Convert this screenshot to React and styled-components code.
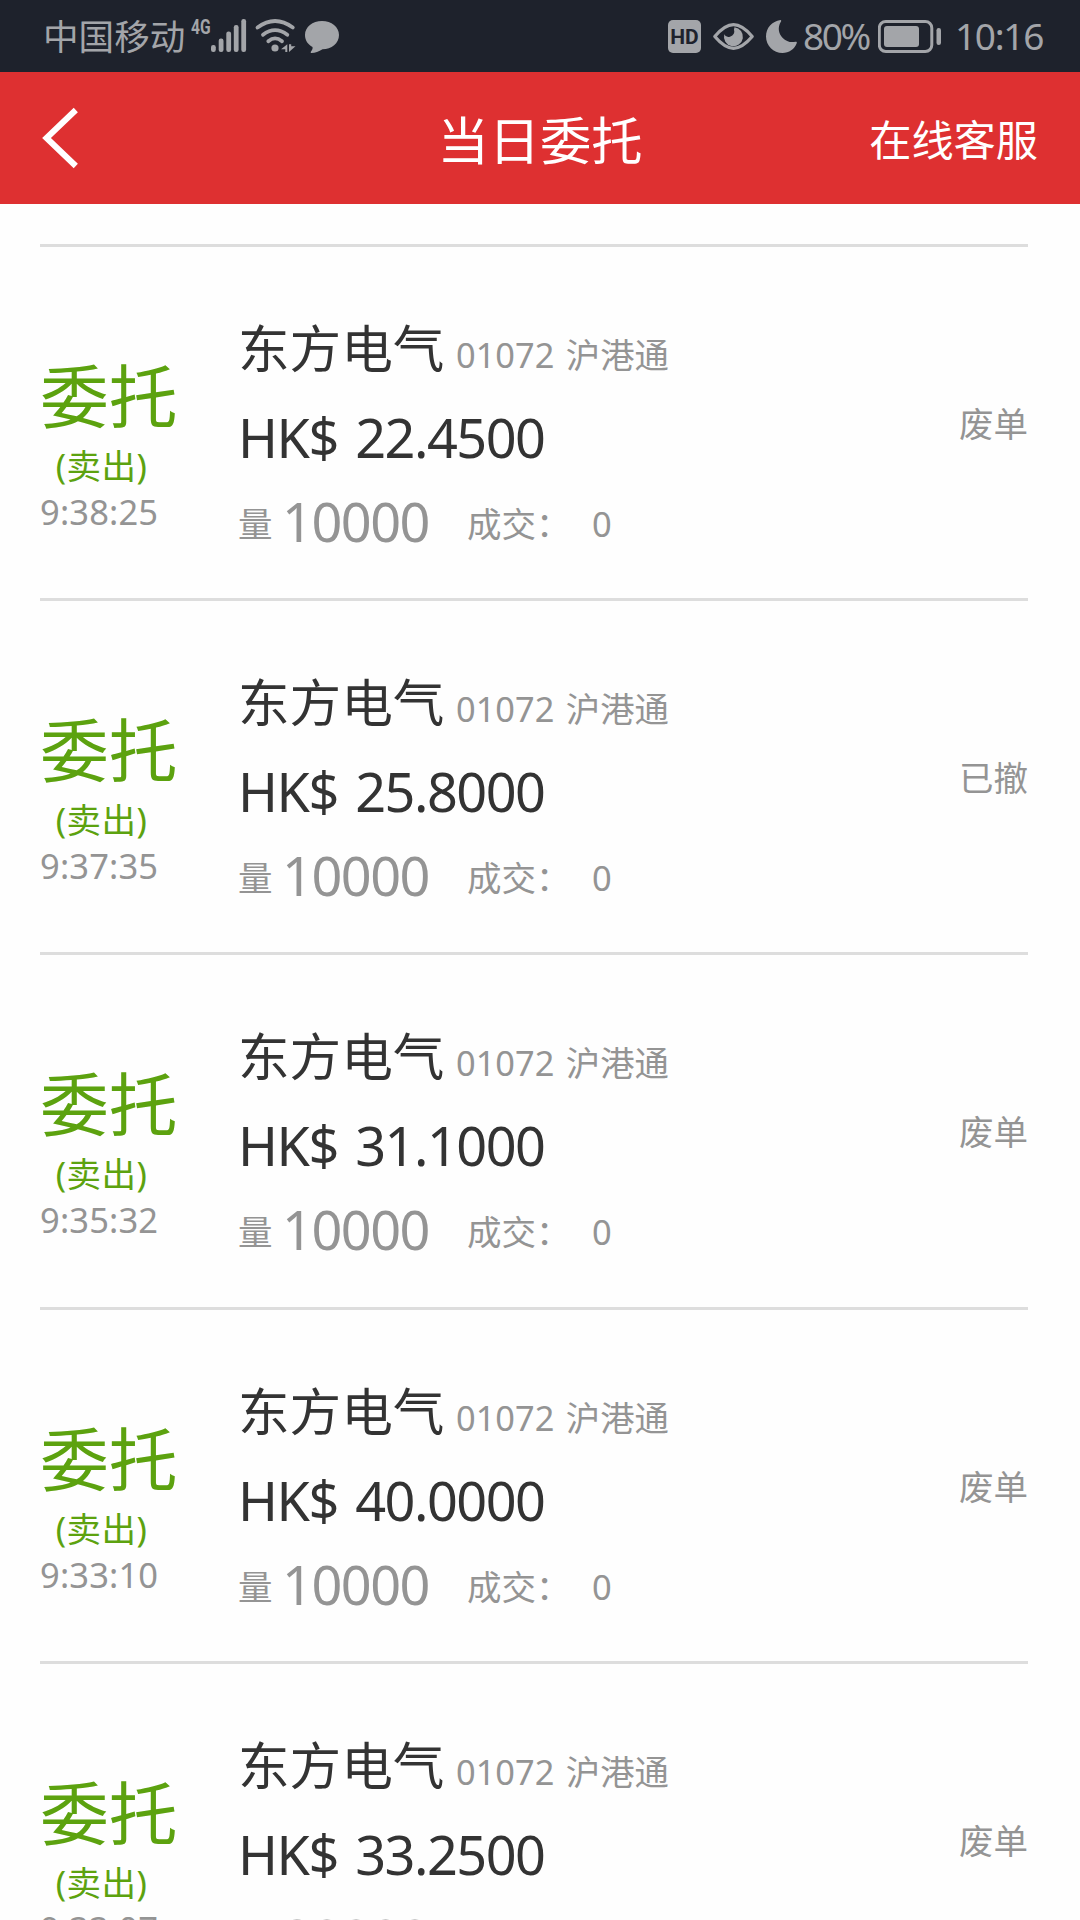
import React from "react";
import styled, { createGlobalStyle } from "styled-components";

const sans = `"Noto Sans", "Noto Sans CJK SC", sans-serif`;
const tone = "#a3a5a9";
const ink = "#1e222c";

const GlobalStyle = createGlobalStyle`
  * { box-sizing: border-box; }
  body { margin: 0; background: #fefefe; font-family: ${sans}; }
`;

const Screen = styled.div`
  width: 1080px;
  height: 1920px;
  overflow: hidden;
  display: flex;
  flex-direction: column;
  background: #fefefe;
`;

const StatusBar = styled.div`
  flex: none;
  height: 72px;
  padding: 0 36px 0 43px;
  display: flex;
  align-items: center;
  justify-content: space-between;
  background: ${ink};
  color: ${tone};
`;

const StatusGroup = styled.div`
  display: flex;
  align-items: center;
  height: 72px;
  svg { display: block; flex: none; }
`;

const Carrier = styled.span`
  width: 148px;
  font-size: 35.6px;
  line-height: 76px;
  white-space: nowrap;
`;

const Network = styled.span`
  width: 18.5px;
  height: 72px;
  padding-top: 17px;
  font: 700 20px/20px Roboto, sans-serif;
  transform: scaleX(0.78);
  transform-origin: left;
  white-space: nowrap;
`;

const StatusText = styled.span`
  width: ${(p) => p.$width}px;
  padding-left: ${(p) => p.$inset || 0}px;
  font-size: 37px;
  line-height: 76px;
  letter-spacing: ${(p) => p.$spacing}px;
  white-space: nowrap;
`;

const HdBadge = styled.span`
  width: 33px;
  height: 33px;
  margin-top: 1px;
  border-radius: 5px;
  background: ${tone};
  color: ${ink};
  font: 700 21px/34px Roboto, sans-serif;
  text-align: center;
`;

const Header = styled.header`
  flex: none;
  height: 132px;
  padding: 0 42px;
  display: grid;
  grid-template-columns: 1fr auto 1fr;
  align-items: center;
  background: #de3031;
  color: #fff;
`;

const BackButton = styled.button`
  width: 40px;
  height: 62px;
  padding: 0;
  border: 0;
  background: none;
  color: inherit;
  svg { display: block; }
`;

const Title = styled.h1`
  margin: 0;
  padding-top: 4px;
  font-size: 51.3px;
  font-weight: 400;
  line-height: 76px;
`;

const ServiceLink = styled.a`
  justify-self: end;
  font-size: 42.2px;
  line-height: 60px;
  padding-top: 4px;
`;

const OrderList = styled.ul`
  flex: none;
  margin: 0;
  padding: 40px 52px 0 40px;
  list-style: none;
`;

const OrderRow = styled.li`
  height: 354.2px;
  border-top: 3px solid #ddd;
  display: grid;
  grid-template-columns: 198px 1fr auto;
  align-items: start;
`;

const Side = styled.div`
  padding-top: 109px;
  color: #5ca20f;
  white-space: nowrap;
`;

const SideTitle = styled.div`
  font-size: 68.8px;
  line-height: 80px;
`;

const Direction = styled.div`
  width: 123px;
  margin-top: 8px;
  font-size: 34.5px;
  line-height: 44px;
  letter-spacing: 0.5px;
  text-align: center;
`;

const Time = styled.div`
  margin-top: 2px;
  font-size: 34.5px;
  line-height: 44px;
  letter-spacing: 0.15px;
  color: #949494;
`;

const Detail = styled.div`
  padding-top: 66px;
  color: #333;
  white-space: nowrap;
`;

const NameLine = styled.div`
  height: 70px;
  display: flex;
  align-items: baseline;
  gap: 11.6px;
  font-size: 51.6px;
  line-height: 70px;
`;

const Code = styled.span`
  font-size: 34.4px;
  line-height: 44px;
  color: #949494;
  word-spacing: 2.5px;
`;

const Price = styled.div`
  margin-top: 19px;
  font-size: 54px;
  line-height: 70px;
  letter-spacing: -1.5px;
  word-spacing: 4.8px;
`;

const VolumeLine = styled.div`
  margin-top: 14px;
  height: 70px;
  display: flex;
  align-items: center;
  color: #949494;
`;

const Label = styled.span`
  width: ${(p) => p.$width}px;
  padding-top: 6px;
  font-size: 34.5px;
  line-height: 44px;
`;

const Volume = styled.span`
  width: 185px;
  font-size: 54px;
  line-height: 70px;
  letter-spacing: -1.5px;
`;

const State = styled.div`
  padding-top: 155px;
  font-size: 34.5px;
  line-height: 44px;
  color: #949494;
`;

const orders = [
  { time: "9:38:25", price: "22.4500", volume: "10000", state: "废单" },
  { time: "9:37:35", price: "25.8000", volume: "10000", state: "已撤" },
  { time: "9:35:32", price: "31.1000", volume: "10000", state: "废单" },
  { time: "9:33:10", price: "40.0000", volume: "10000", state: "废单" },
  { time: "9:33:07", price: "33.2500", volume: "20000", state: "废单" },
];

const SignalIcons = () => (
  <svg width="130" height="72" viewBox="209 0 130 72" fill={tone}>
    <rect x="210" y="45" width="4.8" height="7" rx="2.2" />
    <rect x="217.7" y="38.5" width="4.8" height="13.5" rx="2.2" />
    <rect x="225.3" y="31.5" width="4.8" height="20.5" rx="2.2" />
    <rect x="232.8" y="25" width="4.8" height="27" rx="2.2" />
    <rect x="240.3" y="19" width="4.8" height="33" rx="2.2" />
    <g fill="none" stroke={tone} strokeWidth="3.8" strokeLinecap="round">
      <path d="M256.500 27.500 Q274 14.500 291.800 27.500" />
      <path d="M262 34.800 Q274 25.500 286.300 34.800" />
      <path d="M267.300 41.200 Q274 35.500 281 41.200" />
    </g>
    <circle cx="274" cy="48" r="3.600" />
    <path d="M286.300 44.200 V52 H284.300 V49.300 H280 Z" />
    <path d="M288 52 V44.200 H290.200 V46.200 H294.500 Z" />
    <path d="M321 21 C330.500 21 338 27 338 35 C338 43.500 330.500 49.300 321.500 49.300 C318 51.500 314 53 310.500 53 C309.500 53 309.500 52 310.200 51.200 C311.500 49.700 311.800 48.300 311.500 47 C307 44.500 304 40.500 304 35 C304 27 311.500 21 321 21 Z" />
  </svg>
);

const EyeMoonIcons = () => (
  <svg width="102" height="72" viewBox="701 0 102 72">
    <path
      d="M714.800 36.500 C722 28 727.500 24.700 733.500 24.700 C739.500 24.700 745 28 752.200 36.500 C745 45 739.500 48.300 733.500 48.300 C727.500 48.300 722 45 714.800 36.500 Z"
      fill="none"
      stroke={tone}
      strokeWidth="3.300"
      strokeLinejoin="round"
    />
    <path d="M734.500 27.300 A9.500 9.500 0 1 1 724.300 34.200 Q726 38 730 36.800 Q735.500 34.500 734 29.500 Z" fill={tone} />
    <path d="M780.500 20 C781.500 20.300 781.300 21.200 780.700 22 C777.500 27.500 778.500 33.500 782.500 37.700 C786.500 41.800 791 42.800 795.500 41.700 C796.700 41.500 797 42.200 796.800 43 C794.500 49.200 789 53 782.500 53 C773.500 53 766 45.500 766 36.500 C766 28 772 21.200 780.500 20 Z" fill={tone} />
  </svg>
);

const BatteryIcon = () => (
  <svg width="64" height="72" viewBox="878 0 64 72">
    <rect x="879.300" y="21.500" width="52.500" height="30" rx="6.500" fill="none" stroke={tone} strokeWidth="3" />
    <rect x="884" y="26" width="35" height="21" rx="3" fill={tone} />
    <rect x="936.500" y="28" width="4.500" height="17" rx="2.200" fill={tone} />
  </svg>
);

function Order({ order }) {
  return (
    <OrderRow>
      <Side>
        <SideTitle>委托</SideTitle>
        <Direction>(卖出)</Direction>
        <Time>{order.time}</Time>
      </Side>
      <Detail>
        <NameLine>
          东方电气<Code>01072 沪港通</Code>
        </NameLine>
        <Price>HK$ {order.price}</Price>
        <VolumeLine>
          <Label $width={44}>量</Label>
          <Volume>{order.volume}</Volume>
          <Label $width={125}>成交：</Label>
          <Label>0</Label>
        </VolumeLine>
      </Detail>
      <State>{order.state}</State>
    </OrderRow>
  );
}

export default function App() {
  return (
    <Screen>
      <GlobalStyle />
      <StatusBar>
        <StatusGroup>
          <Carrier>中国移动</Carrier>
          <Network>4G</Network>
          <SignalIcons />
        </StatusGroup>
        <StatusGroup>
          <HdBadge>HD</HdBadge>
          <EyeMoonIcons />
          <StatusText $width={75} $spacing={-2.4}>80%</StatusText>
          <BatteryIcon />
          <StatusText $width={102} $spacing={-1.3} $inset={13}>10:16</StatusText>
        </StatusGroup>
      </StatusBar>
      <Header>
        <BackButton aria-label="返回">
          <svg width="40" height="62" viewBox="42 107 40 62">
            <path d="M75.800 110 L46.500 138 L75.800 166" fill="none" stroke="#fff" strokeWidth="6" />
          </svg>
        </BackButton>
        <Title>当日委托</Title>
        <ServiceLink>在线客服</ServiceLink>
      </Header>
      <OrderList>
        {orders.map((order) => (
          <Order key={order.time} order={order} />
        ))}
      </OrderList>
    </Screen>
  );
}
